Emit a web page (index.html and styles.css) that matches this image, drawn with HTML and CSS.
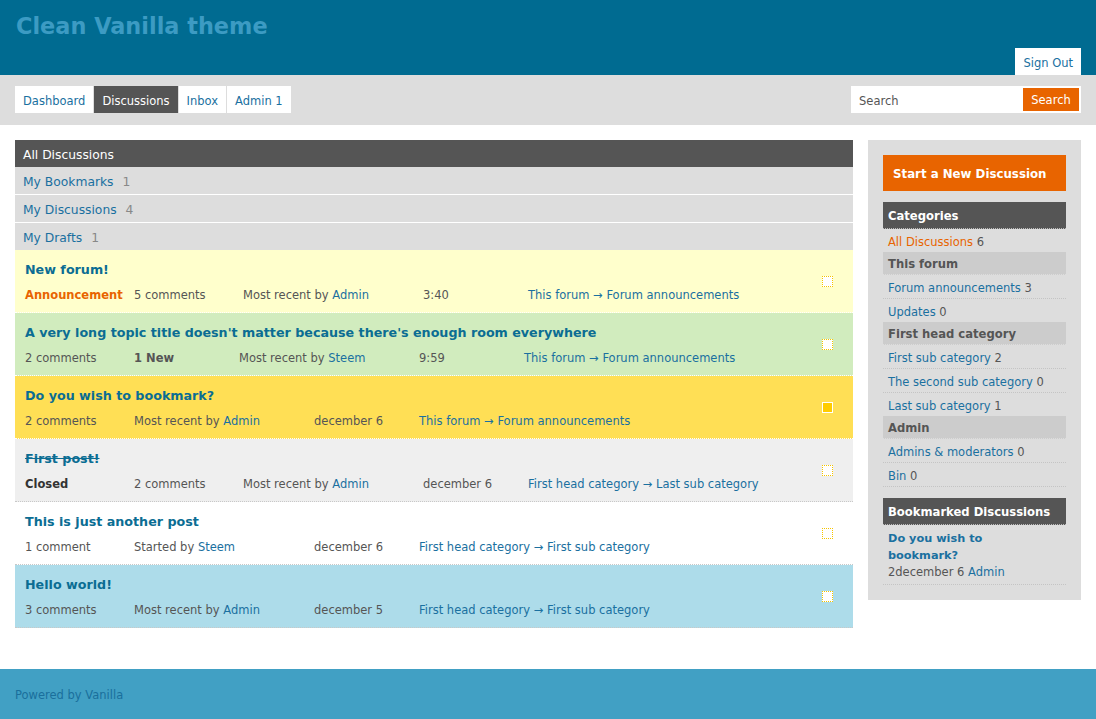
FILE: index.html
```html
<!DOCTYPE html>
<html>
<head>
<meta charset="utf-8">
<title>Clean Vanilla theme</title>
<link rel="stylesheet" href="styles.css">
</head>
<body>
<div class="banner">
  <h1 class="site-title">Clean Vanilla theme</h1>
  <a class="signout" href="#">Sign Out</a>
</div>
<div class="menubar">
  <ul class="menu">
    <li><a href="#">Dashboard</a></li>
    <li class="active"><a href="#">Discussions</a></li>
    <li><a href="#">Inbox</a></li>
    <li><a href="#">Admin 1</a></li>
  </ul>
  <form class="search">
    <span class="search-field">Search</span>
    <span class="search-btn">Search</span>
  </form>
</div>
<div class="content">
  <div class="main">
    <ul class="filters">
      <li class="active">All Discussions</li>
      <li><a href="#">My Bookmarks</a><span class="count">1</span></li>
      <li><a href="#">My Discussions</a><span class="count">4</span></li>
      <li><a href="#">My Drafts</a><span class="count">1</span></li>
    </ul>
    <ul class="discussions">
      <li class="item announce">
        <div class="body">
          <a class="title" href="#">New forum!</a>
          <div class="meta">
            <span class="m w109 announcement">Announcement</span><span class="m w109">5 comments</span><span class="m w180">Most recent by <a href="#">Admin</a></span><span class="m w105">3:40</span><a class="m" href="#">This forum → Forum announcements</a>
          </div>
        </div>
        <span class="bm"></span>
      </li>
      <li class="item mine">
        <div class="body">
          <a class="title" href="#">A very long topic title doesn't matter because there's enough room everywhere</a>
          <div class="meta">
            <span class="m w109">2 comments</span><span class="m w105 new">1 New</span><span class="m w180">Most recent by <a href="#">Steem</a></span><span class="m w105">9:59</span><a class="m" href="#">This forum → Forum announcements</a>
          </div>
        </div>
        <span class="bm"></span>
      </li>
      <li class="item bookmarked">
        <div class="body">
          <a class="title" href="#">Do you wish to bookmark?</a>
          <div class="meta">
            <span class="m w109">2 comments</span><span class="m w180">Most recent by <a href="#">Admin</a></span><span class="m w105">december 6</span><a class="m" href="#">This forum → Forum announcements</a>
          </div>
        </div>
        <span class="bm on"></span>
      </li>
      <li class="item closed">
        <div class="body">
          <a class="title" href="#">First post!</a>
          <div class="meta">
            <span class="m w109 closed-tag">Closed</span><span class="m w109">2 comments</span><span class="m w180">Most recent by <a href="#">Admin</a></span><span class="m w105">december 6</span><a class="m" href="#">First head category → Last sub category</a>
          </div>
        </div>
        <span class="bm"></span>
      </li>
      <li class="item plain">
        <div class="body">
          <a class="title" href="#">This is just another post</a>
          <div class="meta">
            <span class="m w109">1 comment</span><span class="m w180">Started by <a href="#">Steem</a></span><span class="m w105">december 6</span><a class="m" href="#">First head category → First sub category</a>
          </div>
        </div>
        <span class="bm"></span>
      </li>
      <li class="item unread">
        <div class="body">
          <a class="title" href="#">Hello world!</a>
          <div class="meta">
            <span class="m w109">3 comments</span><span class="m w180">Most recent by <a href="#">Admin</a></span><span class="m w105">december 5</span><a class="m" href="#">First head category → First sub category</a>
          </div>
        </div>
        <span class="bm"></span>
      </li>
    </ul>
  </div>
  <div class="panel">
    <a class="new-discussion" href="#">Start a New Discussion</a>
    <div class="box">
      <h4 class="box-head">Categories</h4>
      <ul class="cats">
        <li class="cat last"><a class="current" href="#">All Discussions</a> 6</li>
        <li class="cat-head">This forum</li>
        <li class="cat"><a href="#">Forum announcements</a> 3</li>
        <li class="cat last"><a href="#">Updates</a> 0</li>
        <li class="cat-head">First head category</li>
        <li class="cat"><a href="#">First sub category</a> 2</li>
        <li class="cat"><a href="#">The second sub category</a> 0</li>
        <li class="cat last"><a href="#">Last sub category</a> 1</li>
        <li class="cat-head">Admin</li>
        <li class="cat"><a href="#">Admins &amp; moderators</a> 0</li>
        <li class="cat"><a href="#">Bin</a> 0</li>
      </ul>
    </div>
    <div class="box">
      <h4 class="box-head">Bookmarked Discussions</h4>
      <ul class="bookmarks">
        <li><a class="bm-title" href="#">Do you wish to bookmark?</a><div class="bm-meta">2december 6 <a href="#">Admin</a></div></li>
      </ul>
    </div>
  </div>
</div>
<div class="footer"><a href="#">Powered by Vanilla</a></div>
</body>
</html>
```

FILE: styles.css
```css
* { box-sizing: border-box; }
body {
  margin: 0;
  font-family: "DejaVu Sans", Verdana, sans-serif;
  font-size: 11.5px;
  color: #555;
  background: #fff;
}
a { color: #1a70a0; text-decoration: none; }
ul { list-style: none; margin: 0; padding: 0; }

.banner {
  background: #006b91;
  height: 75px;
  padding: 0 15px;
  display: flex;
  justify-content: space-between;
  align-items: flex-end;
}
.site-title {
  align-self: flex-start;
  margin: 12px 0 0 1px;
  font-size: 22.4px;
  line-height: 28px;
  font-weight: bold;
  color: #3c9bc3;
}
.signout {
  background: #fff;
  height: 27px;
  padding: 3px 8px 0;
  line-height: 24px;
}

.menubar {
  background: #ddd;
  height: 50px;
  padding: 11px 15px 0;
  display: flex;
  justify-content: space-between;
  align-items: flex-start;
}
.menu { display: flex; gap: 1px; }
.menu li a {
  display: block;
  background: #fff;
  height: 27px;
  padding: 3px 8px 0;
  line-height: 24px;
}
.menu li.active a { background: #555; color: #fff; }
.search {
  margin: 0;
  width: 230px;
  height: 27px;
  background: #fff;
  display: flex;
  align-items: center;
  justify-content: space-between;
  padding: 0 2px 0 8px;
}
.search-field { color: #555; padding-top: 2px; }
.search-btn {
  background: #e86400;
  color: #fff;
  width: 56px;
  height: 23px;
  padding-top: 2px;
  line-height: 21px;
  text-align: center;
}

.content {
  display: flex;
  align-items: flex-start;
  gap: 15px;
  padding: 15px 15px 41px;
}
.main { width: 838px; flex: none; }

.filters li {
  height: 28px;
  padding: 3px 8px 0;
  line-height: 24px;
  font-size: 12.3px;
  background: #ddd;
  border-bottom: 1px solid #fff;
}
.filters li.active { background: #555; color: #fff; height: 27px; border-bottom: 0; }
.filters li:last-child { border-bottom: 0; height: 27px; }
.filters .count { color: #888; margin-left: 9px; }

.item {
  display: flex;
  align-items: center;
  height: 63px;
  border-bottom: 1px dotted #c8c8c8;
  padding: 0 20px 0 10px;
}
.item.announce { background: #ffffcc; border-bottom-color: #fff; }
.item.mine { background: #d1ecbe; border-bottom-color: #fff; }
.item.bookmarked { background: #ffdf55; border-bottom-color: #fff; }
.item.closed { background: #efefef; }
.item.plain { background: #fff; }
.item.unread { background: #addcea; }
.item .body { flex: 1; padding-top: 3px; }
.title {
  display: block;
  font-size: 12.7px;
  font-weight: bold;
  line-height: 17px;
  color: #0b6d93;
}
.closed .title { text-decoration: line-through; }
.meta { margin-top: 9px; line-height: 17px; white-space: nowrap; }
.m { display: inline-block; }
.w109 { width: 109px; }
.w105 { width: 105px; }
.w180 { width: 180px; }
.announcement { color: #e86400; font-weight: bold; }
.closed-tag { color: #333; font-weight: bold; }
.new { color: #555; font-weight: bold; }
.bm {
  width: 11px;
  height: 11px;
  border: 1px dotted #f5c400;
  background: #fff;
  flex: none;
  margin-top: 1px;
}
.bm.on { border: 1px solid #fff; background: #fc0; }

.panel {
  width: 213px;
  flex: none;
  background: #ddd;
  padding: 15px;
}
.new-discussion {
  display: block;
  height: 36px;
  padding: 3px 0 0 10px;
  line-height: 33px;
  background: #e86400;
  color: #fff;
  font-size: 11.8px;
  font-weight: bold;
}
.box { margin-top: 11px; }
.box-head {
  margin: 0;
  height: 27px;
  padding: 2px 0 0 5px;
  line-height: 24px;
  background: #555;
  color: #fff;
  font-size: 11.6px;
  font-weight: bold;
  border-bottom: 1px dotted #bbb;
}
.cat {
  height: 24px;
  padding: 3px 0 0 5px;
  line-height: 20px;
  border-bottom: 1px dotted #c4c4c4;
}
.cat.last { height: 23px; border-bottom: 0; }
.cat a.current { color: #e86400; }
.cat-head {
  height: 23px;
  padding: 2px 0 0 5px;
  line-height: 20px;
  background: #ccc;
  color: #555;
  font-weight: bold;
  font-size: 11.6px;
  border-bottom: 1px dotted #ddd;
}
.bookmarks li {
  padding: 5px 5px 3px;
  line-height: 17px;
  border-bottom: 1px dotted #c4c4c4;
}
.bm-title { font-weight: bold; font-size: 11.3px; display: block; padding-right: 20px; }

.footer {
  background: #41a0c4;
  height: 50px;
  padding-top: 2px;
  line-height: 48px;
  padding-left: 15px;
}
.footer a { color: #1a6f9c; }
```
